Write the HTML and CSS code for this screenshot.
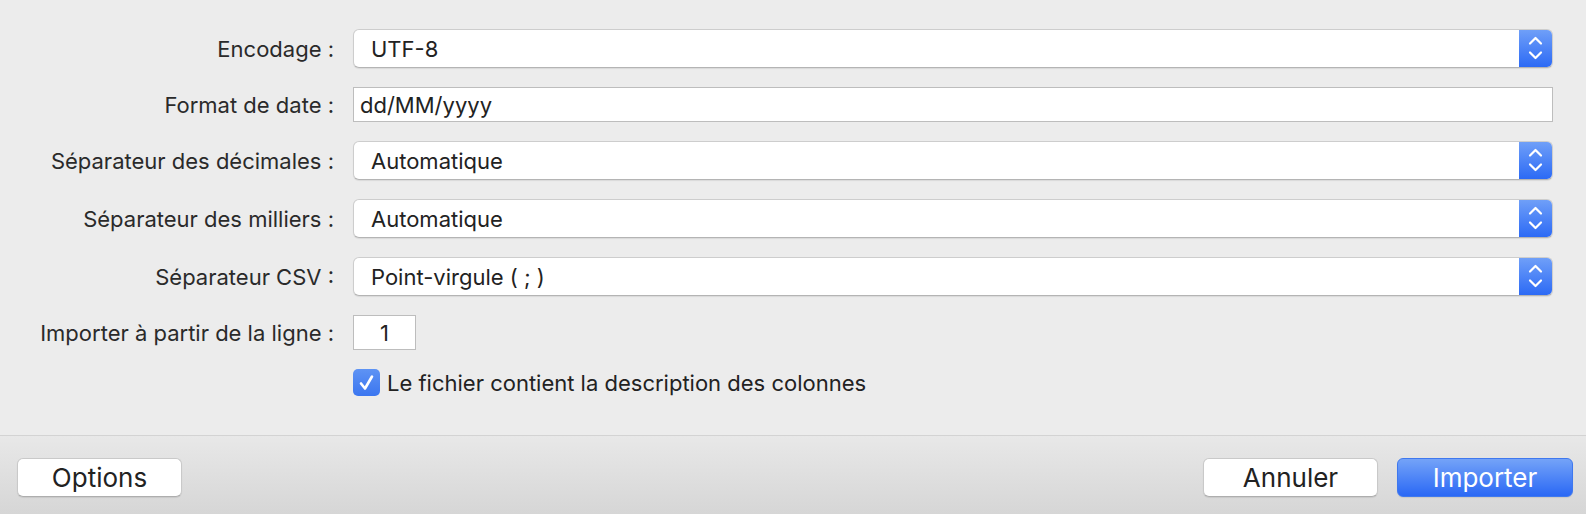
FILE: index.html
```html
<!DOCTYPE html>
<html lang="fr">
<head>
<meta charset="utf-8">
<link rel="stylesheet" href="styles.css">
</head>
<body>
<div class="dialog">
  <div class="form">
    <div class="label">Encodage :</div>
    <div class="popup"><span class="popup-text">UTF-8</span><span class="stepper"><svg width="33" height="37" viewBox="0 0 33 37"><path d="M11 13.5 L16.5 8 L22 13.5 M11 22.5 L16.5 28 L22 22.5" fill="none" stroke="#fff" stroke-width="2.2" stroke-linecap="round" stroke-linejoin="round"/></svg></span></div>

    <div class="label">Format de date :</div>
    <div class="field wide">dd/MM/yyyy</div>

    <div class="label">Séparateur des décimales :</div>
    <div class="popup"><span class="popup-text">Automatique</span><span class="stepper"><svg width="33" height="37" viewBox="0 0 33 37"><path d="M11 13.5 L16.5 8 L22 13.5 M11 22.5 L16.5 28 L22 22.5" fill="none" stroke="#fff" stroke-width="2.2" stroke-linecap="round" stroke-linejoin="round"/></svg></span></div>

    <div class="label">Séparateur des milliers :</div>
    <div class="popup"><span class="popup-text">Automatique</span><span class="stepper"><svg width="33" height="37" viewBox="0 0 33 37"><path d="M11 13.5 L16.5 8 L22 13.5 M11 22.5 L16.5 28 L22 22.5" fill="none" stroke="#fff" stroke-width="2.2" stroke-linecap="round" stroke-linejoin="round"/></svg></span></div>

    <div class="label">Séparateur CSV :</div>
    <div class="popup"><span class="popup-text">Point-virgule ( ; )</span><span class="stepper"><svg width="33" height="37" viewBox="0 0 33 37"><path d="M11 13.5 L16.5 8 L22 13.5 M11 22.5 L16.5 28 L22 22.5" fill="none" stroke="#fff" stroke-width="2.2" stroke-linecap="round" stroke-linejoin="round"/></svg></span></div>

    <div class="label">Importer à partir de la ligne :</div>
    <div><div class="field small">1</div></div>

    <div class="label"></div>
    <div class="check-row"><span class="checkbox"><svg width="27" height="27" viewBox="0 0 27 27"><path d="M8 14.5 L12 19.5 L19 7.5" fill="none" stroke="#fff" stroke-width="2.6" stroke-linecap="round" stroke-linejoin="round"/></svg></span><span class="check-label">Le fichier contient la description des colonnes</span></div>
  </div>
  <div class="footer">
    <button class="btn options">Options</button>
    <div class="actions">
      <button class="btn cancel">Annuler</button>
      <button class="btn primary">Importer</button>
    </div>
  </div>
</div>
</body>
</html>
```

FILE: styles.css
```css
* { box-sizing: border-box; }
html, body {
  margin: 0;
  padding: 0;
}
body {
  width: 1586px;
  height: 514px;
  overflow: hidden;
  background: #ececec;
  font-family: "Inter", "Liberation Sans", sans-serif;
  font-size: 22px;
  color: #262626;
}
.dialog {
  display: flex;
  flex-direction: column;
  height: 514px;
}
.form {
  display: grid;
  grid-template-columns: 334px 1200px;
  column-gap: 19px;
  row-gap: 19px;
  padding-top: 29px;
  height: 436px;
  align-content: start;
  align-items: center;
  border-bottom: 1px solid #d3d3d3;
}
.label {
  text-align: right;
  color: #2a2a2a;
  white-space: nowrap;
}
.popup {
  height: 39px;
  display: flex;
  align-items: center;
  background: #fff;
  border: 1px solid #cdcdcd;
  border-bottom-color: #b4b4b4;
  border-radius: 6px;
  box-shadow: 0 1px 1px rgba(0,0,0,0.08);
  overflow: hidden;
}
.popup-text {
  flex: 1;
  padding-left: 17px;
  color: #222;
}
.stepper {
  width: 33px;
  height: 100%;
  display: flex;
  align-items: center;
  justify-content: center;
  background: linear-gradient(#6f9ff8, #2c6af5);
}
.field {
  height: 35px;
  display: flex;
  align-items: center;
  background: #fff;
  border: 1px solid #bdbdbd;
  padding-left: 6px;
  color: #222;
}
.field.small {
  width: 63px;
  padding-left: 0;
  justify-content: center;
}
.check-row {
  display: flex;
  align-items: center;
  gap: 7px;
  height: 27px;
}
.checkbox {
  width: 27px;
  height: 27px;
  border-radius: 5px;
  background: linear-gradient(#5e93f4, #3b76f0);
  display: flex;
}
.check-label {
  color: #222;
}
.footer {
  flex: 1;
  display: flex;
  justify-content: space-between;
  align-items: flex-start;
  padding: 22px 13px 0 17px;
  background: linear-gradient(#e8e8e8, #d6d6d6);
}
.actions {
  display: flex;
  gap: 19px;
}
.btn {
  height: 39px;
  font-family: inherit;
  font-size: 26px;
  border-radius: 6px;
  background: #fff;
  color: #222;
  border: 1px solid #c9c9c9;
  border-bottom-color: #aeaeae;
  box-shadow: 0 1px 1px rgba(0,0,0,0.08);
  padding: 0;
}
.options { width: 165px; }
.cancel { width: 175px; }
.primary {
  width: 176px;
  color: #fff;
  border: 1px solid #3f78ee;
  background: linear-gradient(#74a3f8, #2a68f5);
}
```
